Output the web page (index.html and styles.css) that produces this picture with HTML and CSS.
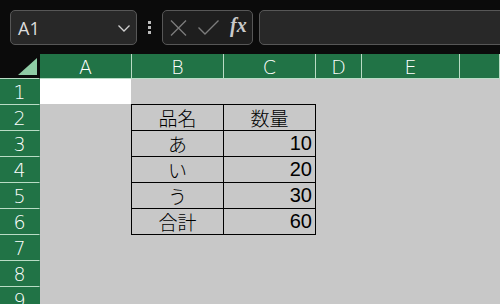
FILE: index.html
```html
<!DOCTYPE html>
<html lang="ja">
<head>
    <meta charset="UTF-8">
    <title>Sheet</title>
    <link rel="stylesheet" href="styles.css">
</head>
<body>
<div class="toolbar">
    <div class="namebox">
        <span class="cellref">A1</span>
        <svg class="chevron" width="12" height="7" viewBox="0 0 12 7">
            <polyline points="0.5,0.5 6,6 11.5,0.5" fill="none" stroke="#d0d0d0" stroke-width="1.3"/>
        </svg>
    </div>
    <div class="grip"><i></i><i></i><i></i></div>
    <div class="fxbox">
        <svg class="cancel" width="17" height="16" viewBox="0 0 17 16">
            <path d="M1 0.5 L16 15.5 M16 0.5 L1 15.5" stroke="#7c7c7c" stroke-width="1.4" fill="none"/>
        </svg>
        <svg class="enter" width="21" height="15" viewBox="0 0 21 15">
            <polyline points="0.5,7.5 7,14 20.5,0.5" fill="none" stroke="#7c7c7c" stroke-width="1.4"/>
        </svg>
        <span class="fx">fx</span>
    </div>
    <div class="formula"></div>
</div>

<div class="sheet">
    <div class="corner">
        <svg width="19" height="17" viewBox="0 0 19 17"><polygon points="19,0 19,17 0,17" fill="#8fcca5"/></svg>
    </div>
    <div class="colhead">A</div>
    <div class="colhead">B</div>
    <div class="colhead">C</div>
    <div class="colhead">D</div>
    <div class="colhead">E</div>
    <div class="colhead"></div>

    <div class="rowhead">1</div>
    <div class="rowhead">2</div>
    <div class="rowhead">3</div>
    <div class="rowhead">4</div>
    <div class="rowhead">5</div>
    <div class="rowhead">6</div>
    <div class="rowhead">7</div>
    <div class="rowhead">8</div>
    <div class="rowhead">9</div>

    <div class="active"></div>

    <div class="table">
        <div class="cell center">品名</div>
        <div class="cell center">数量</div>
        <div class="cell center">あ</div>
        <div class="cell num">10</div>
        <div class="cell center">い</div>
        <div class="cell num">20</div>
        <div class="cell center">う</div>
        <div class="cell num">30</div>
        <div class="cell center">合計</div>
        <div class="cell num">60</div>
    </div>
</div>
</body>
</html>
```

FILE: styles.css
```css
html, body{
    margin: 0;
    padding: 0;
    background-color: #0b0b0b;
    overflow: hidden;
}

.toolbar{
    height: 54px;
    box-sizing: border-box;
    padding: 10px 0 9px 10px;
    display: flex;
    align-items: stretch;
}

.namebox{
    width: 127px;
    box-sizing: border-box;
    border: 1px solid #575757;
    border-radius: 5px;
    background-color: #282828;
    display: flex;
    align-items: center;
    padding: 0 6px 0 7px;
}
.cellref{
    flex: 1;
    font: 18px "Open Sans", "Noto Sans", sans-serif;
    color: #dcdcdc;
    margin-top: 1px;
}
.chevron{
    margin-top: 2px;
}

.grip{
    width: 25px;
    display: flex;
    flex-direction: column;
    align-items: center;
    justify-content: center;
    gap: 2px;
}
.grip i{
    width: 3px;
    height: 3px;
    background-color: #bdbdbd;
}

.fxbox{
    width: 91px;
    box-sizing: border-box;
    border: 1px solid #575757;
    border-radius: 5px;
    background-color: #1e1e1e;
    display: flex;
    align-items: center;
    padding: 0 0 0 7px;
}
.cancel{
    margin-right: 11px;
}
.enter{
    margin-right: 11px;
}
.fx{
    font: italic bold 20px "Liberation Serif", "DejaVu Serif", serif;
    color: #c9c9c9;
    margin-top: -4px;
}

.formula{
    flex: 1;
    margin-left: 6px;
    margin-right: -10px;
    border: 1px solid #575757;
    border-radius: 5px;
    background-color: #282828;
}

.sheet{
    height: 250px;
    overflow: hidden;
    background-color: #c8c8c8;
    display: grid;
    grid-template-columns: 40px 92px 92px 92px 46px 98px 1fr;
    grid-template-rows: 25px;
    grid-auto-rows: 26px;
}

.corner{
    background-color: #0b0b0b;
    border-right: 1px solid #0b0b0b;
    border-bottom: 1px solid #b9dcc5;
    display: flex;
    align-items: flex-end;
    justify-content: flex-end;
    padding: 0 2px 3px 0;
}

.colhead,
.rowhead{
    box-sizing: border-box;
    background-color: #217346;
    color: #ffffff;
    font: 200 19px "DejaVu Sans", "Liberation Sans", sans-serif;
    display: flex;
    align-items: center;
    justify-content: center;
}
.colhead{
    border-right: 1px solid #b9dcc5;
    border-bottom: 1px solid #b9dcc5;
    padding-top: 1px;
}
.rowhead{
    grid-column: 1;
    border-bottom: 1px solid #b9dcc5;
    border-right: 1px solid #217346;
}

.active{
    grid-column: 2;
    grid-row: 2;
    background-color: #ffffff;
    margin: 0 1px 1px 0;
}

.table{
    grid-column: 3 / 5;
    grid-row: 3 / 8;
    margin: -1px 0 0 -1px;
    border-left: 1px solid #000000;
    border-top: 1px solid #000000;
    display: grid;
    grid-template-columns: 92px 92px;
    grid-auto-rows: 26px;
}
.cell{
    box-sizing: border-box;
    border-right: 1px solid #000000;
    border-bottom: 1px solid #000000;
    font: 20px "Liberation Sans", "Noto Sans CJK JP", sans-serif;
    color: #000000;
    display: flex;
    align-items: center;
}
.center{
    justify-content: center;
    font-size: 19px;
    font-weight: 300;
}
.num{
    justify-content: flex-end;
    padding-right: 3px;
}
```
